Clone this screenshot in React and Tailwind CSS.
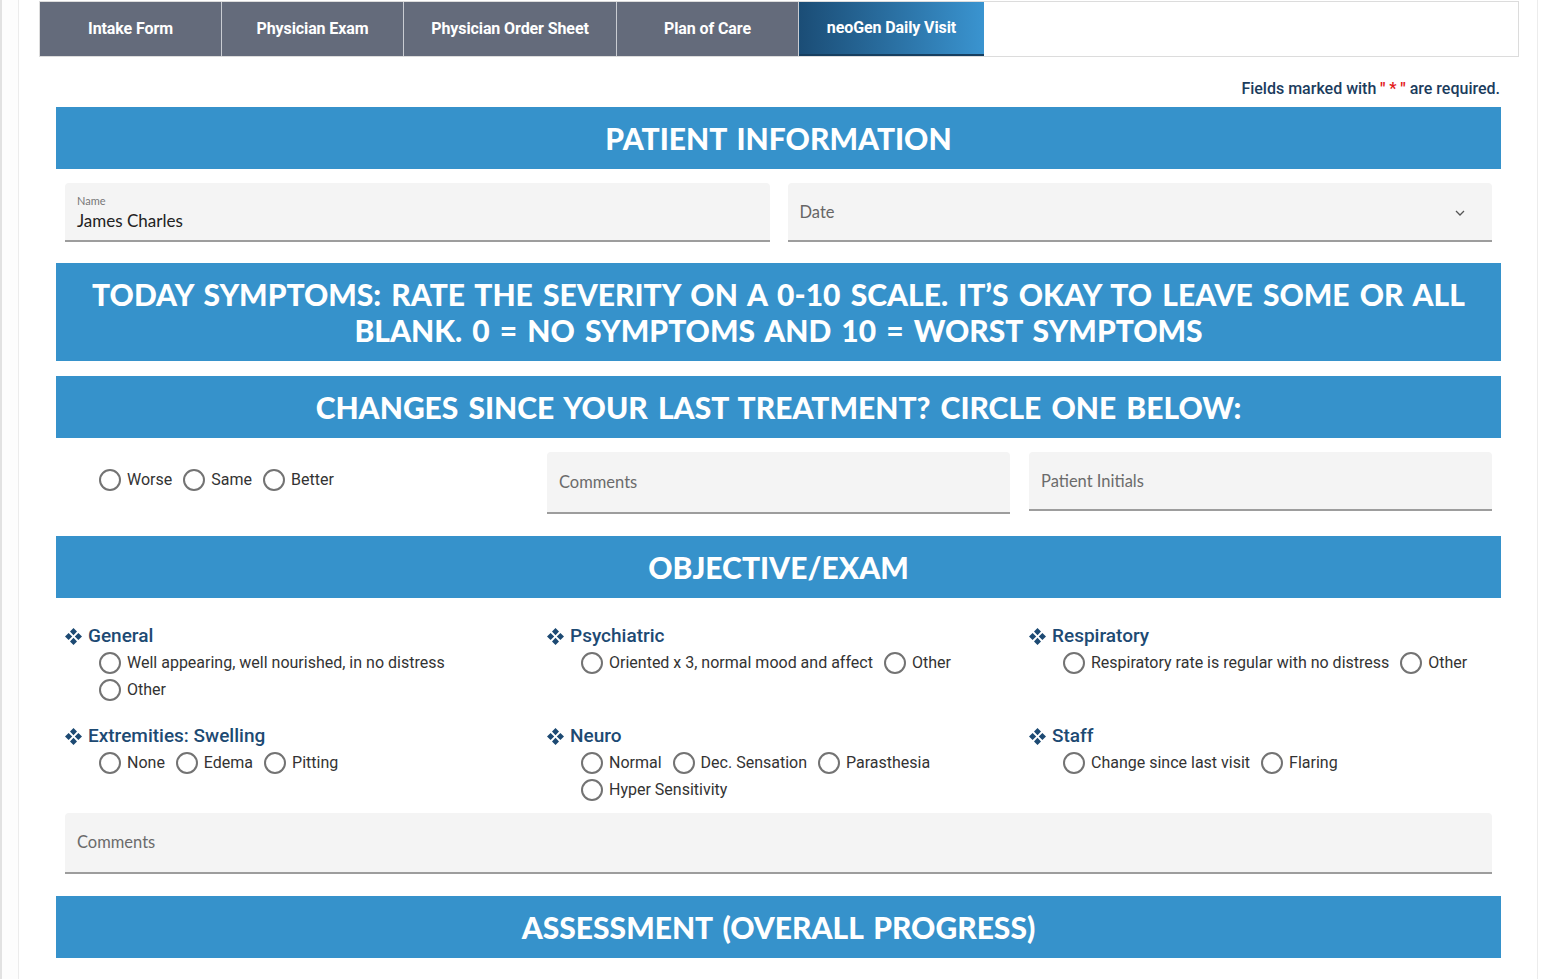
import React, { useState } from 'react';

const tabs = [
  { label: "Intake Form", w: "w-[182px]" },
  { label: "Physician Exam", w: "w-[182px]" },
  { label: "Physician Order Sheet", w: "w-[213px]" },
  { label: "Plan of Care", w: "w-[182px]" },
];

const Diamond = () => (
  <svg width="17" height="17" viewBox="0 0 17 17" className="shrink-0">
    <path fill="#1d4a73" d="M8.5 0 L12 3.6 L8.5 7.2 L5 3.6 Z M3.6 5 L7.2 8.5 L3.6 12 L0 8.5 Z M13.4 5 L17 8.5 L13.4 12 L9.8 8.5 Z M8.5 9.8 L12 13.4 L8.5 17 L5 13.4 Z" />
  </svg>
);

const Banner = ({ children, tall }) => (
  <div className={`bg-[#3692cb] flex items-center justify-center text-center text-white font-['Lato'] font-black uppercase text-[30px] leading-[36px] [word-spacing:3px] ${tall ? "h-[98px]" : "h-[62px]"}`}>
    {children}
  </div>
);

const Radio = ({ label, name, value, checked, onChange }) => (
  <label className="inline-flex items-center mr-[11px] cursor-pointer">
    <input type="radio" name={name} value={value} checked={checked} onChange={onChange} className="sr-only" />
    <span className="w-[22px] h-[22px] rounded-full border-2 border-[#737373] flex items-center justify-center">
      {checked && <span className="w-[10px] h-[10px] rounded-full bg-[#3692cb]" />}
    </span>
    <span className="ml-[6px] text-[16px] text-[#333]">{label}</span>
  </label>
);

const Field = ({ placeholder, className = "" }) => (
  <div className={`bg-[#f4f4f4] rounded-t-[4px] border-b-2 border-[#9d9d9d] flex items-center px-[12px] ${className}`}>
    <input placeholder={placeholder} className="w-full bg-transparent outline-none font-['Lato'] text-[16.5px] text-[#222] placeholder:text-[#6b6b6b]" />
  </div>
);

const exam = [
  { title: "General", name: "general", options: [["Well appearing, well nourished, in no distress"], ["Other"]] },
  { title: "Psychiatric", name: "psych", options: [["Oriented x 3, normal mood and affect", "Other"]] },
  { title: "Respiratory", name: "resp", options: [["Respiratory rate is regular with no distress", "Other"]] },
  { title: "Extremities: Swelling", name: "ext", options: [["None", "Edema", "Pitting"]] },
  { title: "Neuro", name: "neuro", options: [["Normal", "Dec. Sensation", "Parasthesia"], ["Hyper Sensitivity"]] },
  { title: "Staff", name: "staff", options: [["Change since last visit", "Flaring"]] },
];

const App = () => {
  const [answers, setAnswers] = useState({});
  const pick = (name, value) => setAnswers({ ...answers, [name]: value });

  return (
    <div className="min-h-screen bg-white flex font-['Roboto']">
      <div className="w-[18px] shrink-0 border-l-2 border-[#e2e2e2] bg-[#fdfdfd]" />
      <div className="w-[1520px] shrink-0 border-l border-r border-[#ececec] pl-[20px] pr-[18px] pb-[20px]">
        <div className="flex h-[56px] mt-px border border-[#dcdcdc] bg-white">
          {tabs.map((t) => (
            <div key={t.label} className={`${t.w} shrink-0 bg-[#646b7b] border-r border-[#c9ccd2] flex items-center justify-center text-white font-bold text-[16px] tracking-[-0.1px]`}>
              {t.label}
            </div>
          ))}
          <div className="w-[185px] shrink-0 bg-gradient-to-r from-[#1b4d76] to-[#3a94d0] border-b-2 border-[#173f60] flex items-center justify-center text-white font-bold text-[16px] tracking-[-0.1px]">
            neoGen Daily Visit
          </div>
        </div>

        <div className="pl-[17px] pr-[18px]">
          <div className="mt-[22px] mb-[8px] h-[20px] text-right pr-[1px] text-[16px] font-medium text-[#1b3c5d] leading-[20px]">
            Fields marked with <span className="text-[#e31b1b] font-bold">" * "</span> are required.
          </div>

          <Banner>Patient Information</Banner>

          <div className="grid grid-cols-2 gap-[18px] px-[9px] mt-[14px]">
            <div className="h-[59px] bg-[#f4f4f4] rounded-t-[4px] border-b-2 border-[#9d9d9d] px-[12px] pt-[11px] font-['Lato']">
              <div className="text-[11px] leading-[13px] text-[#777]">Name</div>
              <div className="text-[17px] leading-[22px] text-[#222] mt-[3px]">James Charles</div>
            </div>
            <div className="h-[59px] bg-[#f4f4f4] rounded-t-[4px] border-b-2 border-[#9d9d9d] px-[12px] pt-[2px] flex items-center justify-between font-['Lato']">
              <span className="text-[16.5px] text-[#666]">Date</span>
              <svg width="12" height="12" viewBox="0 0 24 24" fill="none" stroke="#555" strokeWidth="2.5" className="mr-[14px]">
                <path d="M4 8l8 8 8-8" />
              </svg>
            </div>
          </div>

          <div className="mt-[21px]">
            <Banner tall>
              Today Symptoms: Rate the severity on a 0-10 scale. It’s okay to leave some or all<br />blank. 0 = no symptoms and 10 = worst symptoms
            </Banner>
          </div>

          <div className="mt-[15px]">
            <Banner>Changes since your last treatment? Circle one below:</Banner>
          </div>

          <div className="grid grid-cols-3 gap-x-[19px] px-[9px] mt-[14px]">
            <div className="flex items-center pl-[34px] h-[62px] pb-[6px]">
              {["Worse", "Same", "Better"].map((o) => (
                <Radio key={o} label={o} name="change" value={o} checked={answers.change === o} onChange={() => pick("change", o)} />
              ))}
            </div>
            <Field placeholder="Comments" className="h-[62px]" />
            <Field placeholder="Patient Initials" className="h-[59px] pt-[2px]" />
          </div>

          <div className="mt-[22px]">
            <Banner>Objective/Exam</Banner>
          </div>

          <div className="grid grid-cols-3 gap-x-[19px] gap-y-[20px] px-[9px] mt-[25px]">
            {exam.map((s) => (
              <div key={s.name} className="h-[80px]">
                <div className="h-[26px] flex items-center gap-[6px] text-[19px] font-medium text-[#1d4a73]">
                  <Diamond />
                  <span>{s.title}</span>
                </div>
                <div className="pl-[34px]">
                  {s.options.map((line, i) => (
                    <div key={i} className="h-[27px] flex items-center">
                      {line.map((o) => (
                        <Radio key={o} label={o} name={s.name} value={o} checked={answers[s.name] === o} onChange={() => pick(s.name, o)} />
                      ))}
                    </div>
                  ))}
                </div>
              </div>
            ))}
          </div>

          <div className="px-[9px] mt-[10px]">
            <Field placeholder="Comments" className="h-[61px]" />
          </div>

          <div className="mt-[22px]">
            <Banner>Assessment (Overall Progress)</Banner>
          </div>
        </div>
      </div>
    </div>
  );
};

export default App;
